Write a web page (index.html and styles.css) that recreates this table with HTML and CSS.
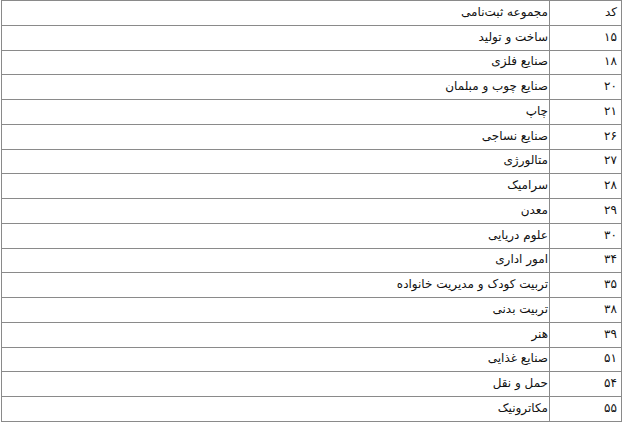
FILE: index.html
```html
<!DOCTYPE html>
<html lang="fa" dir="rtl">
<head>
<meta charset="utf-8">
<link rel="stylesheet" href="styles.css">
</head>
<body>
<table class="grid">
<tbody>
<tr><td class="code">کد</td><td class="name">مجموعه ثبت‌نامی</td></tr>
<tr><td class="code">۱۵</td><td class="name">ساخت و تولید</td></tr>
<tr><td class="code">۱۸</td><td class="name">صنایع فلزی</td></tr>
<tr><td class="code">۲۰</td><td class="name">صنایع چوب و مبلمان</td></tr>
<tr><td class="code">۲۱</td><td class="name">چاپ</td></tr>
<tr><td class="code">۲۶</td><td class="name">صنایع نساجی</td></tr>
<tr><td class="code">۲۷</td><td class="name">متالورژی</td></tr>
<tr><td class="code">۲۸</td><td class="name">سرامیک</td></tr>
<tr><td class="code">۲۹</td><td class="name">معدن</td></tr>
<tr><td class="code">۳۰</td><td class="name">علوم دریایی</td></tr>
<tr><td class="code">۳۴</td><td class="name">امور اداری</td></tr>
<tr><td class="code">۳۵</td><td class="name">تربیت کودک و مدیریت خانواده</td></tr>
<tr><td class="code">۳۸</td><td class="name">تربیت بدنی</td></tr>
<tr><td class="code">۳۹</td><td class="name">هنر</td></tr>
<tr><td class="code">۵۱</td><td class="name">صنایع غذایی</td></tr>
<tr><td class="code">۵۴</td><td class="name">حمل و نقل</td></tr>
<tr><td class="code">۵۵</td><td class="name">مکاترونیک</td></tr>
</tbody>
</table>
</body>
</html>
```
FILE: styles.css
```css
html, body {
  margin: 0;
  padding: 0;
  background: #ffffff;
}
body {
  font-family: "DejaVu Sans", "Noto Sans", sans-serif;
  font-size: 12px;
  color: #111111;
}
.grid {
  border-collapse: collapse;
  width: 621px;
  margin-right: 0;
  margin-left: 1px;
}
.grid td {
  border: 1px solid #8a8a8a;
  height: 21.76px;
  padding: 0 0 2px 0;
  text-align: right;
  vertical-align: middle;
  white-space: nowrap;
}
.code {
  width: 67px;
  padding-right: 4px !important;
}
.name {
  padding-right: 1px !important;
}
```
